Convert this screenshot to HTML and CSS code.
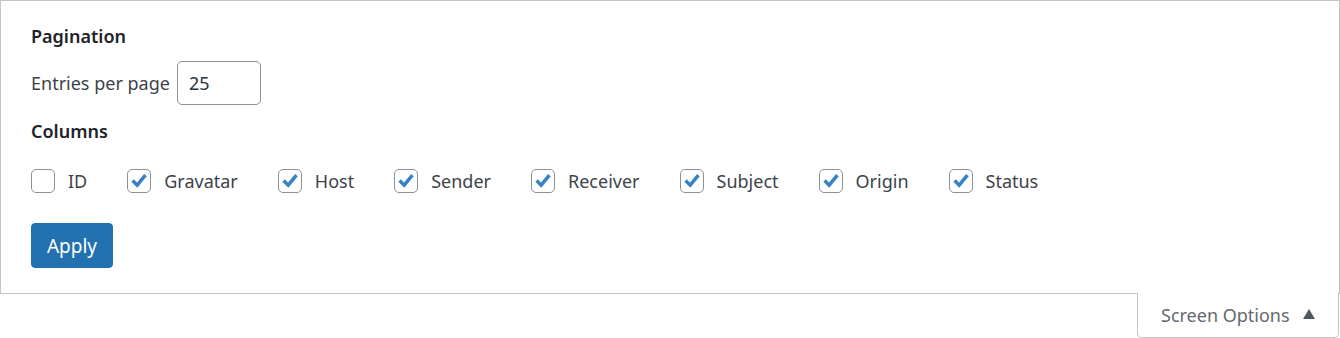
FILE: index.html
```html
<!DOCTYPE html>
<html>
<head>
<meta charset="utf-8">
<link rel="stylesheet" href="styles.css">
</head>
<body>
<div class="panel">
  <form class="prefs">
    <fieldset class="group">
      <legend class="legend">Pagination</legend>
      <label class="per-page">Entries per page <input class="num" type="text" value="25"></label>
    </fieldset>
    <fieldset class="group">
      <legend class="legend">Columns</legend>
      <div class="cols">
        <label class="col"><span class="box"></span>ID</label>
        <label class="col"><span class="box on"><svg viewBox="0 0 24 24"><path d="M5 11.5 L10 16.5 L19 5.5" /></svg></span>Gravatar</label>
        <label class="col"><span class="box on"><svg viewBox="0 0 24 24"><path d="M5 11.5 L10 16.5 L19 5.5" /></svg></span>Host</label>
        <label class="col"><span class="box on"><svg viewBox="0 0 24 24"><path d="M5 11.5 L10 16.5 L19 5.5" /></svg></span>Sender</label>
        <label class="col"><span class="box on"><svg viewBox="0 0 24 24"><path d="M5 11.5 L10 16.5 L19 5.5" /></svg></span>Receiver</label>
        <label class="col"><span class="box on"><svg viewBox="0 0 24 24"><path d="M5 11.5 L10 16.5 L19 5.5" /></svg></span>Subject</label>
        <label class="col"><span class="box on"><svg viewBox="0 0 24 24"><path d="M5 11.5 L10 16.5 L19 5.5" /></svg></span>Origin</label>
        <label class="col"><span class="box on"><svg viewBox="0 0 24 24"><path d="M5 11.5 L10 16.5 L19 5.5" /></svg></span>Status</label>
      </div>
    </fieldset>
    <button class="apply" type="button">Apply</button>
  </form>
</div>
<div class="tabrow">
  <div class="tab">Screen Options <span class="arrow"></span></div>
</div>
</body>
</html>
```
FILE: styles.css
```css
* { box-sizing: border-box; }
body {
  margin: 0;
  background: #fff;
  font-family: "Noto Sans", "Open Sans", sans-serif;
  font-size: 18px;
  color: #3c434a;
}
.panel {
  height: 294px;
  border: 1px solid #c3c4c7;
  background: #fff;
}
.prefs {
  padding: 23px 30px 0;
  margin: 0;
}
.group {
  border: 0;
  margin: 0;
  padding: 0;
}
.legend {
  padding: 0;
  font-weight: 600;
  color: #1d2327;
  line-height: 24px;
}
.per-page {
  display: flex;
  align-items: center;
  gap: 7px;
  margin-top: 13px;
}
.num {
  width: 84px;
  height: 44px;
  border: 1px solid #8c8f94;
  border-radius: 5px;
  padding: 0 11px;
  font: inherit;
  color: #2c3338;
}
.group + .group { margin-top: 14px; }
.cols {
  display: flex;
  margin-top: 26px;
}
.col {
  display: flex;
  align-items: center;
  gap: 13px;
  margin-right: 40px;
  line-height: 24px;
}
.box {
  width: 24px;
  height: 24px;
  border: 1px solid #8c8f94;
  border-radius: 5px;
  display: flex;
  align-items: center;
  justify-content: center;
}
.box svg {
  width: 22px;
  height: 22px;
  fill: none;
  stroke: #3582c4;
  stroke-width: 3.8;
  stroke-linecap: butt;
  stroke-linejoin: miter;
}
.apply {
  display: block;
  margin-top: 30px;
  width: 82px;
  height: 45px;
  border: 1px solid #2271b1;
  border-radius: 4px;
  background: #2271b1;
  color: #fff;
  font: inherit;
  font-size: 19px;
}
.tabrow {
  display: flex;
  justify-content: flex-end;
  padding-right: 1px;
}
.tab {
  margin-top: -1px;
  width: 202px;
  height: 45px;
  border: 1px solid #c3c4c7;
  border-top: 0;
  border-radius: 0 0 5px 5px;
  background: #fff;
  color: #646970;
  display: flex;
  align-items: center;
  padding-left: 23px;
  gap: 13px;
}
.arrow {
  width: 0;
  height: 0;
  border-left: 6px solid transparent;
  border-right: 6px solid transparent;
  border-bottom: 10px solid #50575e;
  margin-bottom: 3px;
}
```
